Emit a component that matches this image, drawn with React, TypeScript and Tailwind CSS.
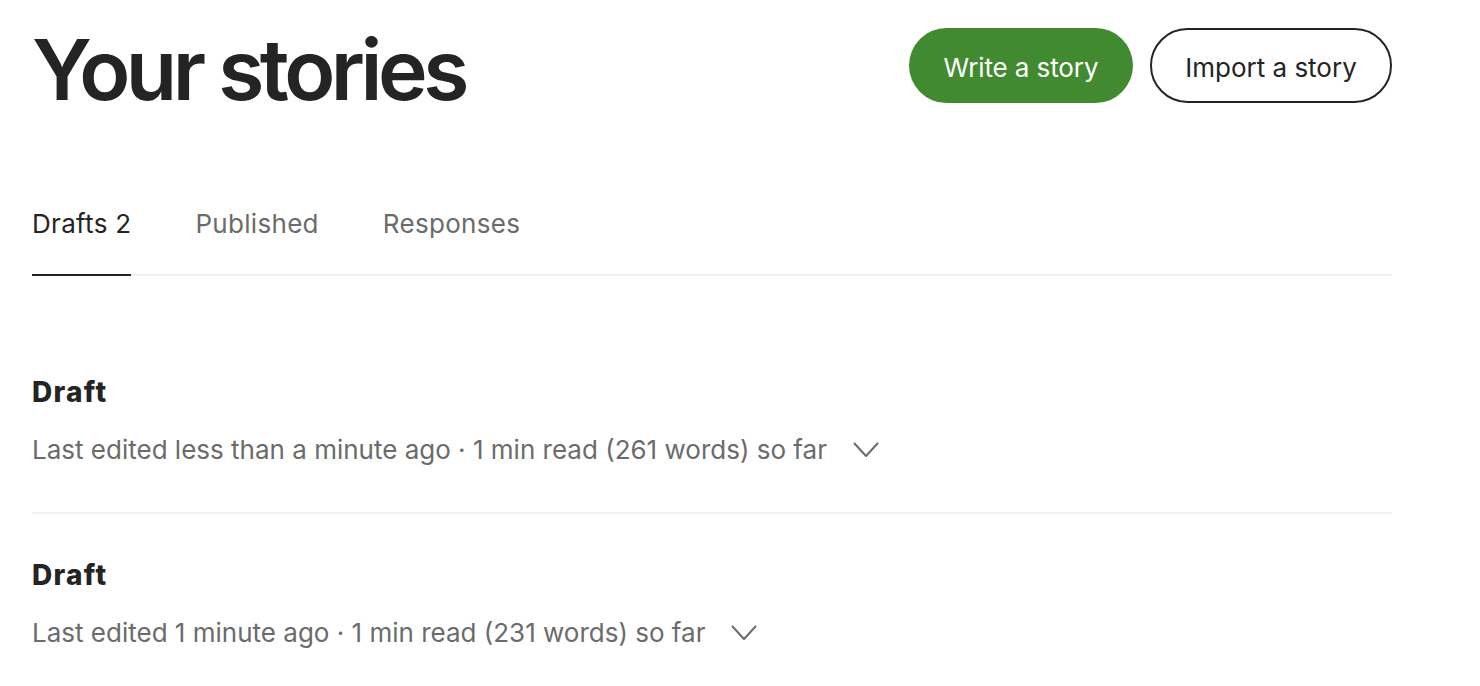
import React from 'react';

interface DraftItem {
  title: string;
  meta: string;
}

const TABS = [
  { label: 'Drafts 2', active: true },
  { label: 'Published', active: false },
  { label: 'Responses', active: false },
];

const DRAFTS: DraftItem[] = [
  { title: 'Draft', meta: 'Last edited less than a minute ago · 1 min read (261 words) so far' },
  { title: 'Draft', meta: 'Last edited 1 minute ago · 1 min read (231 words) so far' },
];

const Chevron = () => (
  <svg width="26" height="16" viewBox="0 0 26 16" fill="none" className="shrink-0">
    <polyline points="1.5,1.5 13,14 24.5,1.5" stroke="#6b6b6b" strokeWidth="2" strokeLinecap="round" strokeLinejoin="round" />
  </svg>
);

export default function App() {
  return (
    <div className="min-h-screen bg-white font-['Inter',sans-serif] text-[#242424]">
      <div className="w-[1360px] ml-[32px]">
        {/* Header */}
        <div className="flex items-start justify-between pt-[20px]">
          <h1 className="text-[84px] leading-[100px] font-semibold tracking-[-4.5px]">Your stories</h1>
          <div className="flex items-center gap-[17px] mt-[8px]">
            <button className="h-[75px] w-[224px] rounded-full bg-[#428a30] text-white text-[26px] tracking-[-0.1px] pt-[3px]">
              Write a story
            </button>
            <button className="h-[75px] w-[242px] rounded-full border-2 border-[#242424] text-[#242424] text-[26px] pt-[3px]">
              Import a story
            </button>
          </div>
        </div>

        {/* Tabs */}
        <div className="mt-[88px] flex gap-[64px] border-b-2 border-[#f2f2f2]">
          {TABS.map((tab) => (
            <div
              key={tab.label}
              className={
                tab.active
                  ? 'pb-[32px] -mb-[2px] border-b-2 border-[#242424] text-[26px] leading-[32px] text-[#242424] tracking-[0.3px]'
                  : 'pb-[34px] text-[26px] leading-[32px] text-[#6b6b6b] tracking-[0.3px]'
              }
            >
              {tab.label}
            </div>
          ))}
        </div>

        {/* Drafts */}
        <div className="mt-[55px]">
          {DRAFTS.map((d, i) => (
            <div
              key={i}
              className={i < DRAFTS.length - 1 ? 'pt-[43px] pb-[44px] border-b-2 border-[#f2f2f2]' : 'pt-[43px] pb-[44px]'}
            >
              <h2 className="text-[28px] leading-[36px] font-extrabold tracking-[1.3px]">{d.title}</h2>
              <div className="mt-[22px] flex items-center gap-[26px] text-[26px] leading-[36px] text-[#6b6b6b]">
                <span>{d.meta}</span>
                <Chevron />
              </div>
            </div>
          ))}
        </div>
      </div>
    </div>
  );
}
